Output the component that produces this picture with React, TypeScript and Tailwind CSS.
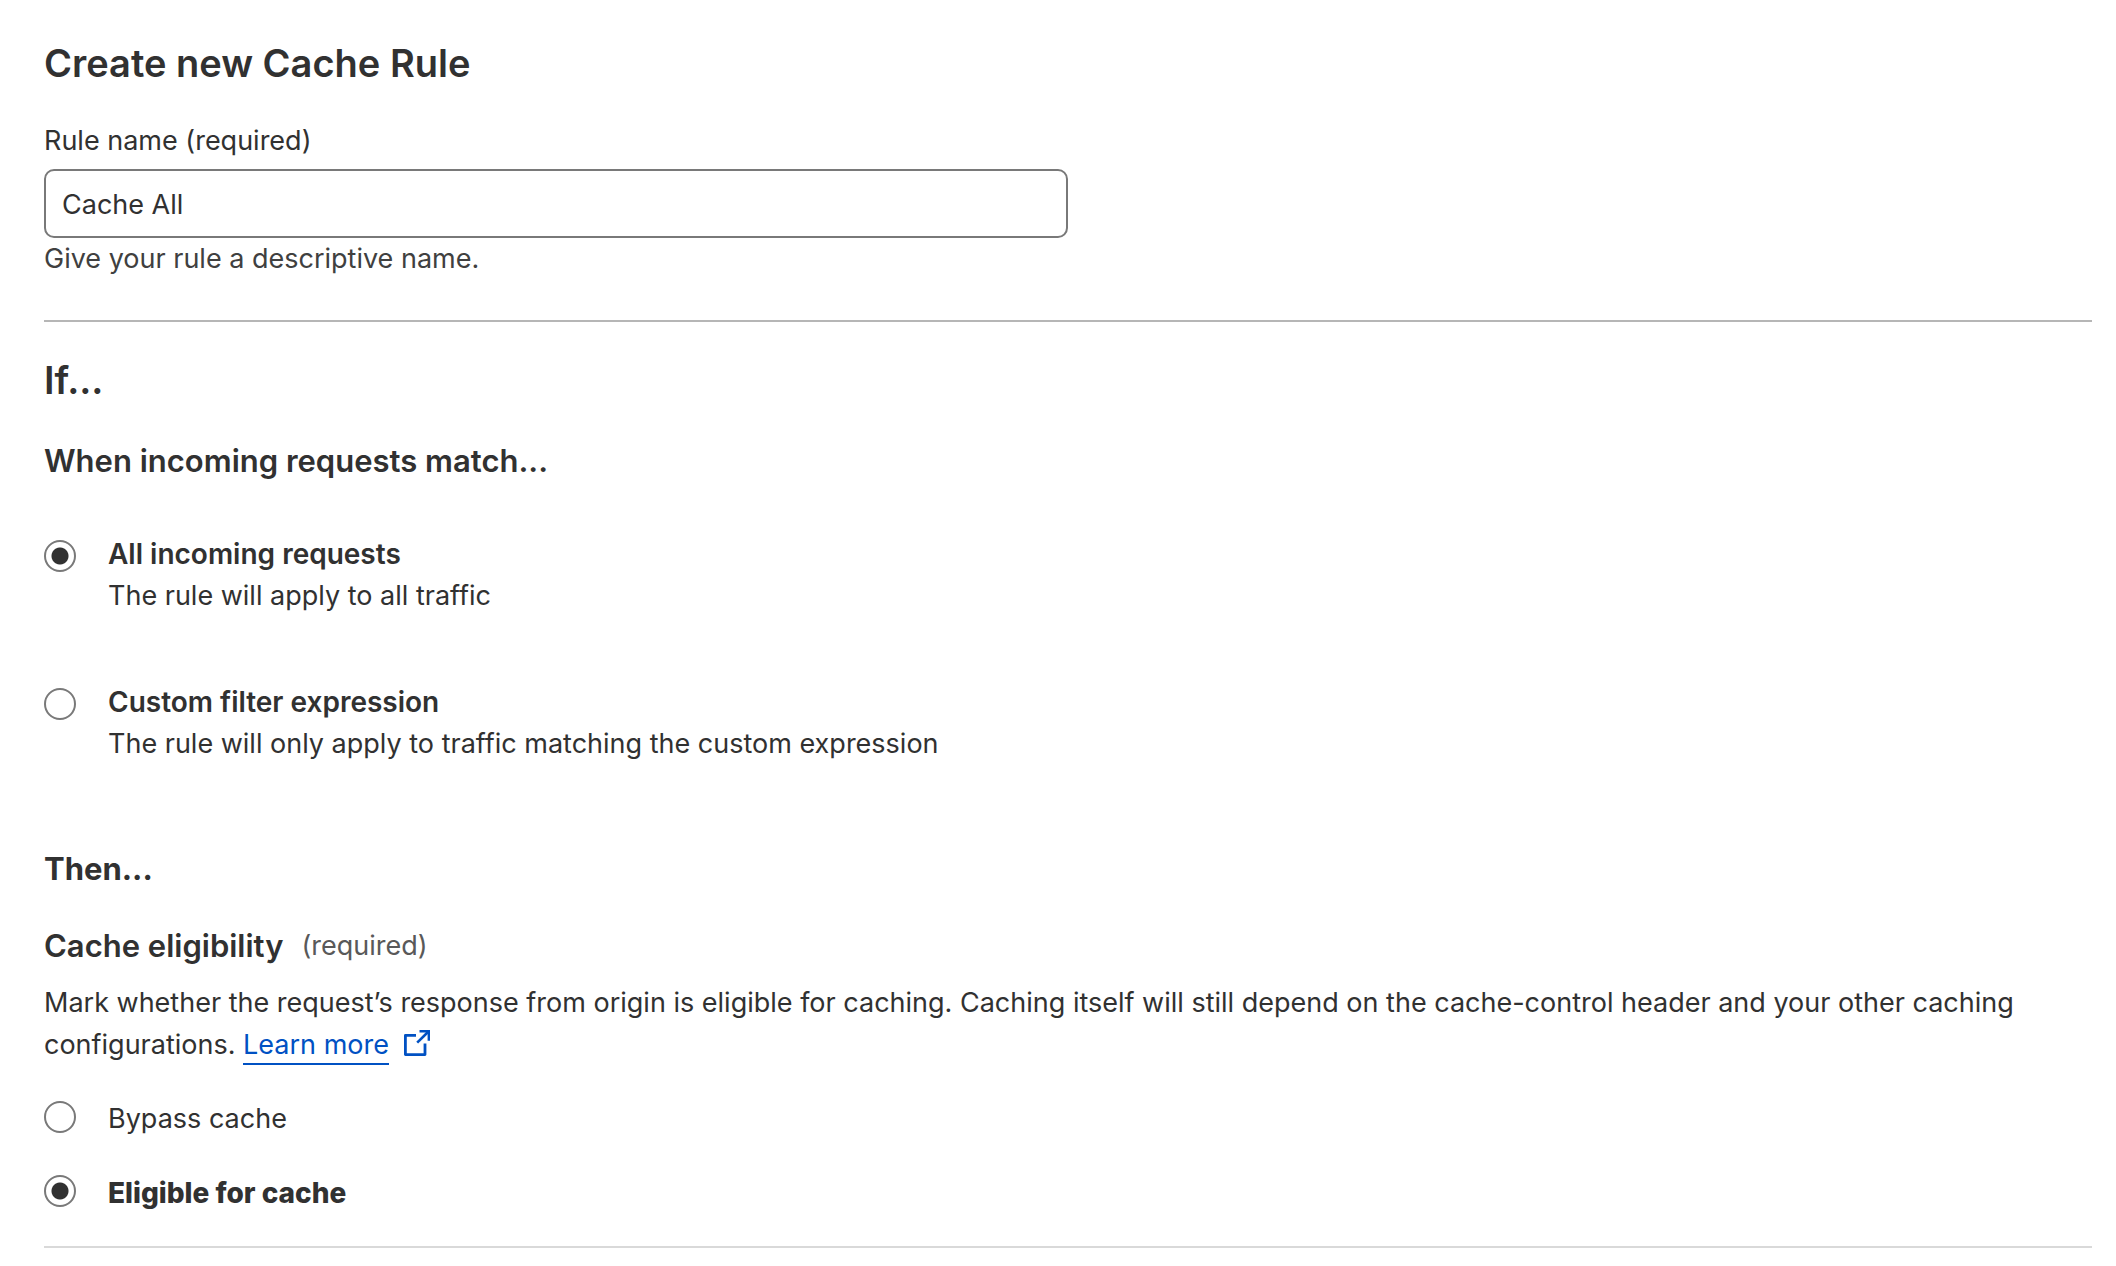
import { useState } from "react";

type RadioProps = {
  name: string;
  id: string;
  checked: boolean;
  onChange: () => void;
};

function Radio({ name, id, checked, onChange }: RadioProps) {
  return (
    <input
      type="radio"
      name={name}
      id={id}
      checked={checked}
      onChange={onChange}
      className="size-8 shrink-0 appearance-none rounded-full border-2 border-[#797979] bg-white checked:bg-[radial-gradient(circle,#313131_7px,#313131_8px,transparent_9px)]"
    />
  );
}

function ExternalLinkIcon() {
  return (
    <svg viewBox="0 0 28 28" className="ml-3.5 inline-block size-7 align-[-3px]" fill="none" stroke="currentColor" strokeWidth="2.8" aria-hidden="true">
      <path d="M13 6.4H2.4V25.6H22V14.5" strokeLinejoin="round" />
      <path d="M16.5 2.2H25.8V11.8" strokeWidth="2.4" />
      <path d="M25.5 2.5L14.2 13.6" strokeWidth="2.6" />
    </svg>
  );
}

export default function App() {
  const [match, setMatch] = useState("all");
  const [cache, setCache] = useState("eligible");
  return (
    <main className="bg-white pt-10 pr-6 pb-4 pl-11 font-[Inter,sans-serif] text-[27px] leading-[42px] text-[#313131]">
      <h1 className="text-[38px] leading-[46px] font-semibold">Create new Cache Rule</h1>
      <div className="mt-[34px] flex flex-col">
        <label htmlFor="rule-name">Rule name (required)</label>
        <input
          id="rule-name"
          defaultValue="Cache All"
          className="mt-[7px] h-[69px] w-1/2 rounded-[10px] border-2 border-[#797979] bg-white px-4 pt-0.5"
        />
        <p className="text-[#404040]">Give your rule a descriptive name.</p>
      </div>
      <hr className="mt-10 border-t-2 border-[#b6b6b6]" />

      <h2 className="mt-[35px] text-[38px] leading-[46px] font-semibold">If...</h2>
      <h3 className="mt-[37px] text-[31px] font-semibold">When incoming requests match...</h3>
      <div className="mt-[51px] flex flex-col gap-16">
        <div className="flex gap-8">
          <div className="flex pt-[7px]">
            <Radio name="match" id="match-all" checked={match === "all"} onChange={() => setMatch("all")} />
          </div>
          <label htmlFor="match-all">
            <span className="block text-[28px] font-semibold">All incoming requests</span>
            <span className="block">The rule will apply to all traffic</span>
          </label>
        </div>
        <div className="flex gap-8">
          <div className="flex pt-[7px]">
            <Radio name="match" id="match-custom" checked={match === "custom"} onChange={() => setMatch("custom")} />
          </div>
          <label htmlFor="match-custom">
            <span className="block text-[28px] font-semibold">Custom filter expression</span>
            <span className="block">The rule will only apply to traffic matching the custom expression</span>
          </label>
        </div>
      </div>

      <h2 className="mt-[83px] text-[31px] font-bold">Then...</h2>
      <div className="mt-[35px] flex items-center gap-[18px]">
        <h3 className="text-[31px] font-semibold">Cache eligibility</h3>
        <span className="text-[#595959]">(required)</span>
      </div>
      <p className="mt-[15px]">
        Mark whether the request’s response from origin is eligible for caching. Caching itself will still depend on the
        cache-control header and your other caching configurations.{" "}
        <a href="#" className="text-[#0051c3]">
          <span className="border-b-2 border-[#0051c3] pb-[2px]">Learn more</span>
          <ExternalLinkIcon />
        </a>
      </p>
      <div className="mt-8 flex flex-col gap-8">
        <div className="flex gap-8">
          <div className="flex pt-[3px]">
            <Radio name="cache" id="bypass" checked={cache === "bypass"} onChange={() => setCache("bypass")} />
          </div>
          <label htmlFor="bypass">Bypass cache</label>
        </div>
        <div className="flex gap-8">
          <div className="flex pt-[3px]">
            <Radio name="cache" id="eligible" checked={cache === "eligible"} onChange={() => setCache("eligible")} />
          </div>
          <label htmlFor="eligible" className="text-[28px] font-extrabold">
            Eligible for cache
          </label>
        </div>
      </div>
      <hr className="mt-8 border-t-2 border-[#d9d9d9]" />
    </main>
  );
}
